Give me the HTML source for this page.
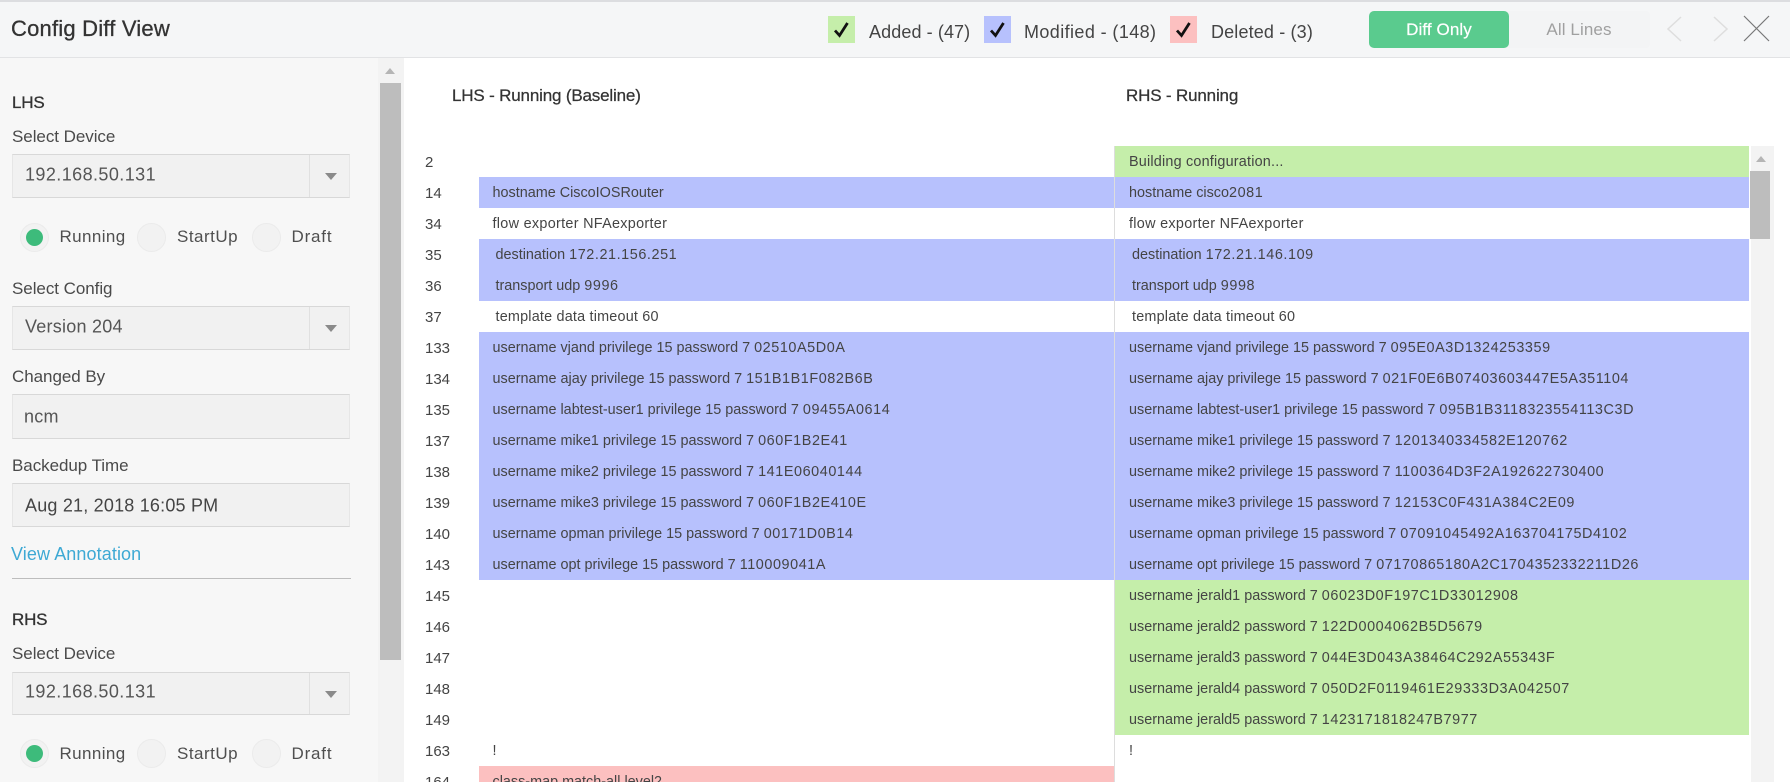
<!DOCTYPE html>
<html><head><meta charset="utf-8"><title>Config Diff View</title>
<style>
html,body{margin:0;padding:0;background:#fff;width:1790px;height:782px;overflow:hidden}
#p{width:1790px;height:782px;overflow:hidden;position:relative;font-family:"Liberation Sans",sans-serif;color:#444}
.a{position:absolute;white-space:nowrap}
.lb{font-size:17px;color:#4a4a4a;line-height:20px;height:20px;letter-spacing:-.05px}
.bd{font-size:17px;color:#333;line-height:20px;height:20px;letter-spacing:-.2px;-webkit-text-stroke:.3px #333}
.sel{position:absolute;left:12px;width:338px;background:#f1f1f1;border:1px solid #e6e6e6;border-bottom-color:#d8d8d8;border-top-color:#d8d8d8;box-sizing:border-box;font-size:18px;color:#555}
.sel span{position:absolute;left:12px;top:50%;transform:translateY(-50%);white-space:nowrap;letter-spacing:.25px}
.sel i{position:absolute;left:296px;top:0;bottom:0;width:1px;background:#e0e0e0}
.sel b{position:absolute;left:312px;top:50%;margin-top:-3px;width:0;height:0;border-left:6px solid transparent;border-right:6px solid transparent;border-top:7px solid #8a8a8a}
.r{position:absolute;width:29px;height:29px;border-radius:50%;background:#f2f2f2;border:1px solid #ebebeb;box-sizing:border-box}
.r i{position:absolute;left:5px;top:5px;width:17px;height:17px;border-radius:50%;background:#3dbb7b}
.rl{font-size:17px;color:#4f4f4f;line-height:20px}
.rows{position:absolute;top:146px;left:0;width:1790px;height:636px;overflow:hidden}
.row{position:relative;height:31px;line-height:31px;font-size:14.4px;color:#444}
.n{position:absolute;left:425px;top:1px;font-size:15px;color:#444}
.l,.rr{position:absolute;top:0;height:31px;line-height:33px;white-space:nowrap;box-sizing:border-box}
.l{left:479px;width:635px;padding-left:13.5px}
.rr{left:1115px;width:634px;padding-left:14px}
.in{margin-left:3px;display:inline-block}
em{font-style:normal;letter-spacing:.58px}
.m{background:#b7c1fd}.g{background:#c5eeaa}.d{background:#fcc0c0}
.cb{position:absolute;top:16px;width:27px;height:27px}
.leg{font-size:18px;color:#444;line-height:22px;top:21px}
.hd{font-size:17px;line-height:20px;color:#333;letter-spacing:-.17px;-webkit-text-stroke:.25px #333}
</style></head>
<body><div id="p">
<!-- header -->
<div class="a" style="left:0;top:0;width:1790px;height:2px;background:#dcdde0"></div>
<div class="a" style="left:0;top:2px;width:1790px;height:55px;background:#f5f6f7"></div>
<div class="a" style="left:0;top:57px;width:1790px;height:1px;background:#e2e3e5"></div>
<div class="a" style="left:11px;top:16px;font-size:22px;line-height:26px;color:#333;letter-spacing:.2px;-webkit-text-stroke:.3px #333">Config Diff View</div>

<div class="cb" style="left:828px;background:#c5eeaa"><svg width="27" height="27" viewBox="0 0 27 27"><path d="M7 14.5l4.5 5 8-12.5" fill="none" stroke="#111" stroke-width="2.8"/></svg></div>
<div class="a leg" style="left:869px;letter-spacing:.1px">Added - (47)</div>
<div class="cb" style="left:984px;background:#b7c1fd"><svg width="27" height="27" viewBox="0 0 27 27"><path d="M7 14.5l4.5 5 8-12.5" fill="none" stroke="#111" stroke-width="2.8"/></svg></div>
<div class="a leg" style="left:1024px;letter-spacing:.4px">Modified - (148)</div>
<div class="cb" style="left:1170px;background:#fcc0c0"><svg width="27" height="27" viewBox="0 0 27 27"><path d="M7 14.5l4.5 5 8-12.5" fill="none" stroke="#111" stroke-width="2.8"/></svg></div>
<div class="a leg" style="left:1211px;letter-spacing:.15px">Deleted - (3)</div>

<div class="a" style="left:1500px;top:11px;width:150px;height:37px;background:#f3f4f5;border-radius:4px"></div>
<div class="a" style="left:1369px;top:11px;width:140px;height:37px;background:#5acb8e;border-radius:5px;color:#fff;font-size:17px;line-height:38px;text-align:center;letter-spacing:.1px;-webkit-text-stroke:.2px #fff">Diff Only</div>
<div class="a" style="left:1530px;top:11px;width:98px;height:37px;color:#a0a0a0;font-size:17px;line-height:38px;text-align:center;letter-spacing:.1px">All Lines</div>
<svg class="a" style="left:1660px;top:10px" width="120" height="38" viewBox="0 0 120 38">
<path d="M21 7L8 19l13 12" fill="none" stroke="#dedede" stroke-width="1.5"/>
<path d="M54 7l13 12-13 12" fill="none" stroke="#dedede" stroke-width="1.5"/>
<path d="M84 6l25 25M109 6L84 31" fill="none" stroke="#777" stroke-width="1.2"/>
</svg>

<!-- sidebar -->
<div class="a" style="left:0;top:58px;width:404px;height:724px;background:#f7f7f7"></div>
<div class="a" style="left:378px;top:58px;width:26px;height:724px;background:#f3f3f3"></div>
<div class="a" style="left:380px;top:83px;width:21px;height:577px;background:#bdbdbd"></div>
<div class="a" style="left:385px;top:68px;width:0;height:0;border-left:5px solid transparent;border-right:5px solid transparent;border-bottom:6px solid #b5b5b5"></div>

<div class="a bd" style="left:12px;top:93px">LHS</div>
<div class="a lb" style="left:12px;top:127px">Select Device</div>
<div class="sel" style="top:154px;height:44px"><span style="margin-top:-1px;letter-spacing:.42px">192.168.50.131</span><i></i><b></b></div>
<div class="r" style="left:20px;top:223px"><i></i></div><div class="a rl" style="left:59.5px;top:227px;letter-spacing:.4px">Running</div>
<div class="r" style="left:137px;top:223px"></div><div class="a rl" style="left:177px;top:227px;letter-spacing:.5px">StartUp</div>
<div class="r" style="left:252px;top:223px"></div><div class="a rl" style="left:291.5px;top:227px;letter-spacing:.8px">Draft</div>
<div class="a lb" style="left:12px;top:279px">Select Config</div>
<div class="sel" style="top:306px;height:44px"><span style="margin-top:-1px">Version 204</span><i></i><b></b></div>
<div class="a lb" style="left:12px;top:367px">Changed By</div>
<div class="sel" style="top:394px;height:45px"><span style="left:11px">ncm</span></div>
<div class="a lb" style="left:12px;top:456px">Backedup Time</div>
<div class="sel" style="top:483px;height:44px;color:#444"><span style="margin-top:1px;letter-spacing:.2px">Aug 21, 2018 16:05 PM</span></div>
<div class="a" style="left:11px;top:544px;font-size:18px;line-height:20px;color:#3ea9d4;letter-spacing:.1px">View Annotation</div>
<div class="a" style="left:12px;top:578px;width:339px;height:1px;background:#bdbdbd"></div>
<div class="a bd" style="left:12px;top:610px">RHS</div>
<div class="a lb" style="left:12px;top:644px">Select Device</div>
<div class="sel" style="top:672px;height:43px"><span style="margin-top:-2px;letter-spacing:.42px">192.168.50.131</span><i></i><b></b></div>
<div class="r" style="left:20px;top:739px"><i></i></div><div class="a rl" style="left:59.5px;top:744px;letter-spacing:.4px">Running</div>
<div class="r" style="left:137px;top:739px"></div><div class="a rl" style="left:177px;top:744px;letter-spacing:.5px">StartUp</div>
<div class="r" style="left:252px;top:739px"></div><div class="a rl" style="left:291.5px;top:744px;letter-spacing:.8px">Draft</div>

<!-- main -->
<div class="a hd" style="left:452px;top:86px">LHS - Running (Baseline)</div>
<div class="a hd" style="left:1126px;top:86px">RHS - Running</div>

<div class="a" style="left:1114px;top:146px;width:1px;height:636px;background:#ddd"></div>
<div class="a" style="left:1751px;top:146px;width:23px;height:636px;background:#f3f3f3"></div>
<div class="a" style="left:1750px;top:171px;width:20px;height:68px;background:#bdbdbd"></div>
<div class="a" style="left:1756px;top:156px;width:0;height:0;border-left:5px solid transparent;border-right:5px solid transparent;border-bottom:6px solid #b5b5b5"></div>

<div class="rows">
<div class="row"><span class="n">2</span><div class="rr g"><span style="letter-spacing:.2px">Building configuration...</span></div></div>
<div class="row"><span class="n">14</span><div class="l m">hostname CiscoIOSRouter</div><div class="rr m">hostname cisco<em>2081</em></div></div>
<div class="row"><span class="n">34</span><div class="l"><span style="letter-spacing:.3px">flow exporter NFAexporter</span></div><div class="rr"><span style="letter-spacing:.3px">flow exporter NFAexporter</span></div></div>
<div class="row"><span class="n">35</span><div class="l m"><span class="in">destination <em>172.21.156.251</em></span></div><div class="rr m"><span class="in">destination <em>172.21.146.109</em></span></div></div>
<div class="row"><span class="n">36</span><div class="l m"><span class="in">transport udp <em>9996</em></span></div><div class="rr m"><span class="in">transport udp <em>9998</em></span></div></div>
<div class="row"><span class="n">37</span><div class="l"><span class="in" style="letter-spacing:.2px">template data timeout 60</span></div><div class="rr"><span class="in" style="letter-spacing:.2px">template data timeout 60</span></div></div>
<div class="row"><span class="n">133</span><div class="l m">username vjand privilege 15 password 7 <em>02510A5D0A</em></div><div class="rr m">username vjand privilege 15 password 7 <em>095E0A3D1324253359</em></div></div>
<div class="row"><span class="n">134</span><div class="l m">username ajay privilege 15 password 7 <em>151B1B1F082B6B</em></div><div class="rr m">username ajay privilege 15 password 7 <em>021F0E6B07403603447E5A351104</em></div></div>
<div class="row"><span class="n">135</span><div class="l m">username labtest-user1 privilege 15 password 7 <em>09455A0614</em></div><div class="rr m">username labtest-user1 privilege 15 password 7 <em>095B1B3118323554113C3D</em></div></div>
<div class="row"><span class="n">137</span><div class="l m">username mike1 privilege 15 password 7 <em>060F1B2E41</em></div><div class="rr m">username mike1 privilege 15 password 7 <em>1201340334582E120762</em></div></div>
<div class="row"><span class="n">138</span><div class="l m">username mike2 privilege 15 password 7 <em>141E06040144</em></div><div class="rr m">username mike2 privilege 15 password 7 <em>1100364D3F2A192622730400</em></div></div>
<div class="row"><span class="n">139</span><div class="l m">username mike3 privilege 15 password 7 <em>060F1B2E410E</em></div><div class="rr m">username mike3 privilege 15 password 7 <em>12153C0F431A384C2E09</em></div></div>
<div class="row"><span class="n">140</span><div class="l m">username opman privilege 15 password 7 <em>00171D0B14</em></div><div class="rr m">username opman privilege 15 password 7 <em>07091045492A163704175D4102</em></div></div>
<div class="row"><span class="n">143</span><div class="l m">username opt privilege 15 password 7 <em>110009041A</em></div><div class="rr m">username opt privilege 15 password 7 <em>07170865180A2C1704352332211D26</em></div></div>
<div class="row"><span class="n">145</span><div class="rr g">username jerald1 password 7 <em>06023D0F197C1D33012908</em></div></div>
<div class="row"><span class="n">146</span><div class="rr g">username jerald2 password 7 <em>122D0004062B5D5679</em></div></div>
<div class="row"><span class="n">147</span><div class="rr g">username jerald3 password 7 <em>044E3D043A38464C292A55343F</em></div></div>
<div class="row"><span class="n">148</span><div class="rr g">username jerald4 password 7 <em>050D2F0119461E29333D3A042507</em></div></div>
<div class="row"><span class="n">149</span><div class="rr g">username jerald5 password 7 <em>1423171818247B7977</em></div></div>
<div class="row"><span class="n">163</span><div class="l">!</div><div class="rr">!</div></div>
<div class="row"><span class="n">164</span><div class="l d">class-map match-all level2</div></div>
</div>
</div></body></html>
